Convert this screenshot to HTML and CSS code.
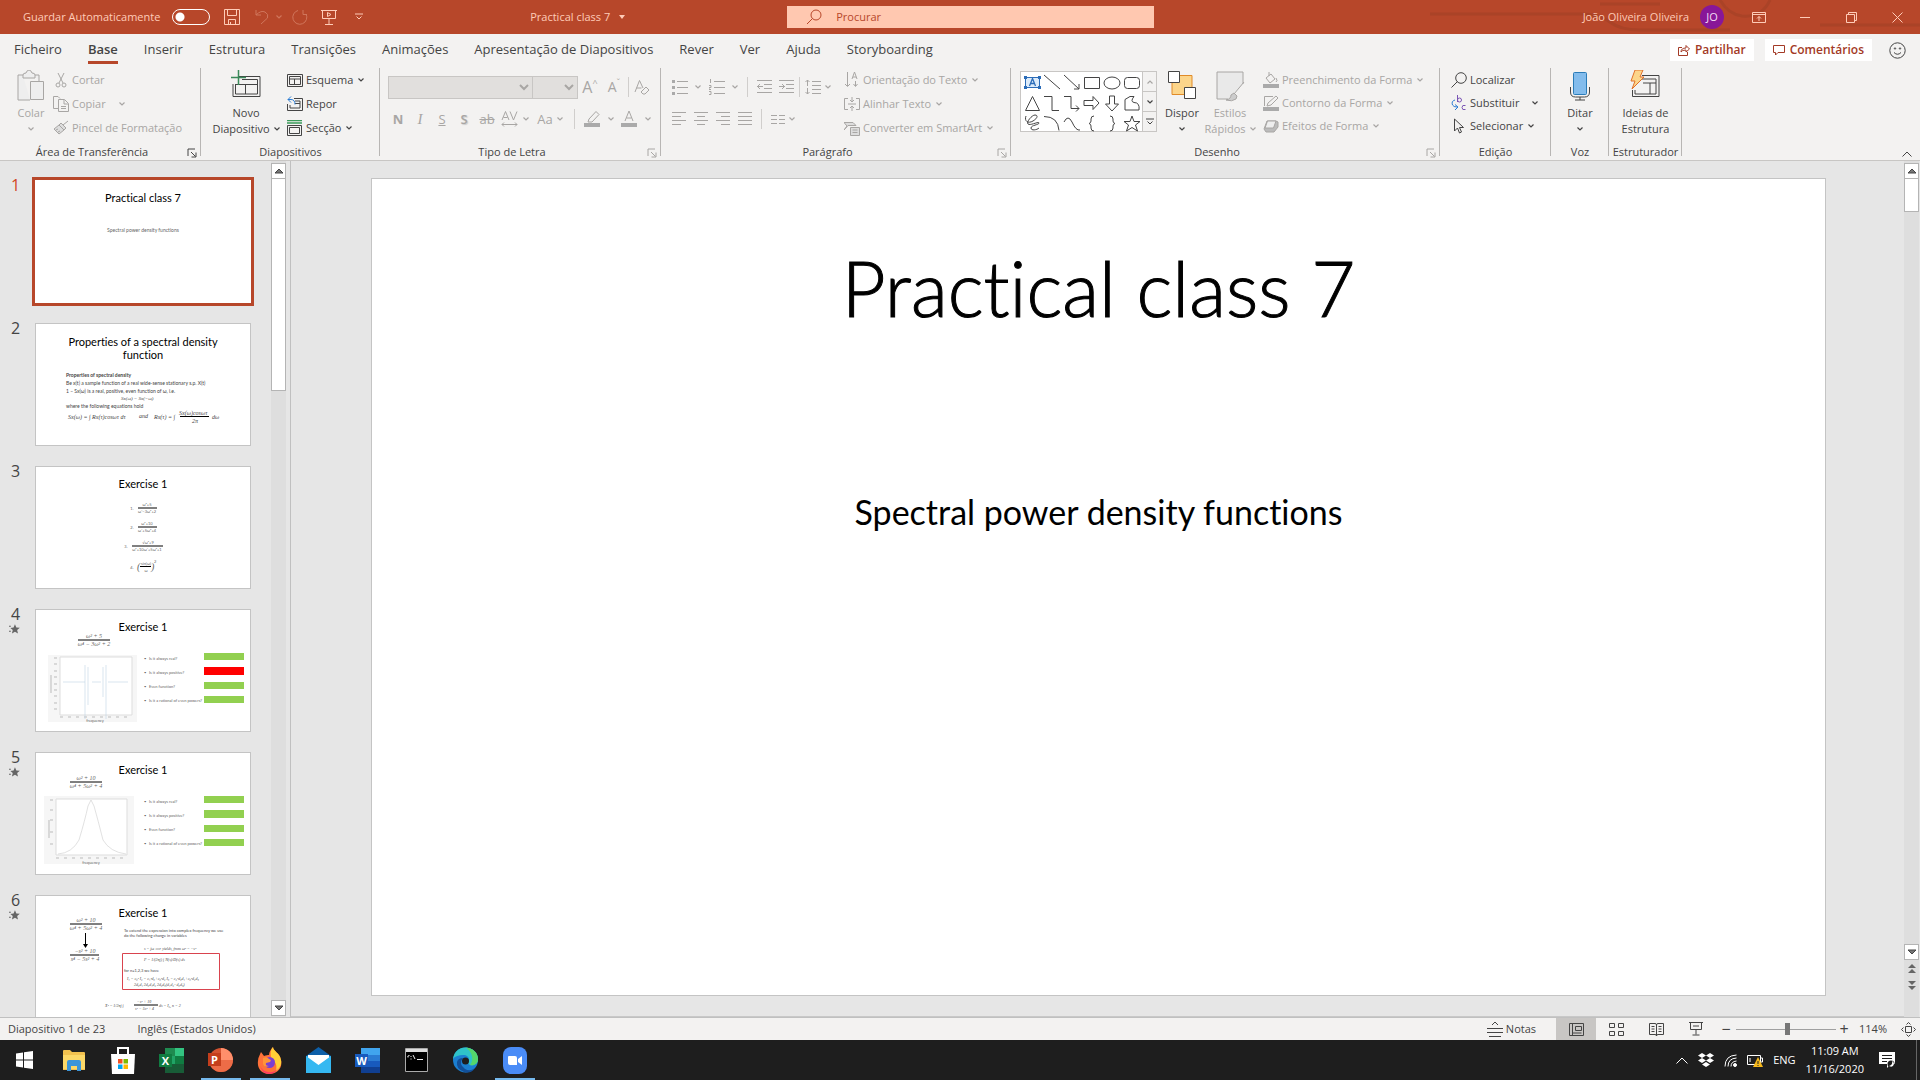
FILE: index.html
```
<!DOCTYPE html>
<html lang="pt">
<head>
<meta charset="utf-8">
<title>Practical class 7</title>
<link rel="stylesheet" href="styles.css">
</head>
<body>
<svg class="defs" aria-hidden="true">
  <symbol id="chev" viewBox="0 0 6 4"><path d="M.5 .5 3 3 5.500 .5" fill="none" stroke="currentColor" stroke-width="1.200"/></symbol>
  <symbol id="launch" viewBox="0 0 10 10"><path d="M1 8V1h7M4 4l4.500 4.500M9 4.500V9H4.500" fill="none" stroke="currentColor"/></symbol>
  <symbol id="up" viewBox="0 0 8 8"><path d="M0 6 4 2l4 4z" fill="#777"/></symbol>
  <symbol id="down" viewBox="0 0 8 8"><path d="M0 2l4 4 4-4z" fill="#777"/></symbol>
  <symbol id="star" viewBox="0 0 12 12"><path d="M6.500 .8 8 4.300l3.800.3-2.900 2.500.9 3.900-3.300-2.100L3.200 11l.9-3.900L1.500 4.800 5 4.300zM0 2.500h2v1H0zM0 8h2v1H0z" fill="#666"/></symbol>
</svg>

<header class="titlebar">
  <svg class="swirl" viewBox="0 0 500 34" fill="none" stroke="#8f3a22" stroke-width="3" aria-hidden="true"><path d="M10 14h150q20 0 30 8t30 8h90M300 0q8 14 22 16 20 2 28-16M400 25h100M180 4h60"/></svg>
  <div class="tb-left">
    <label class="autosave">Guardar Automaticamente <input type="checkbox" class="switch"></label>
    <button class="tb-btn save" aria-label="Guardar"><svg width="16" height="16" viewBox="0 0 16 16"><path d="M.5 .5h15v15h-15zM3.500 .5v6h9v-6M4.500 15.500v-5h7v5M6.500 13v2.500"/></svg></button>
    <button class="tb-btn undo" aria-label="Anular"><svg width="14" height="16" viewBox="0 0 14 16"><path d="M1 1v5h5M1 6q5-5 9-3t2.500 6L6 15"/></svg><svg class="chev"><use href="#chev"/></svg></button>
    <button class="tb-btn redo" aria-label="Refazer"><svg width="16" height="16" viewBox="0 0 16 16"><path d="M11 1v4.500h4M14 5A7 7 0 1 1 6 1.500"/></svg></button>
    <button class="tb-btn show" aria-label="Apresentar"><svg width="16" height="16" viewBox="0 0 16 16"><path d="M0 1.500h16M1.500 1.500v8h13v-8M8 10v5M4 15.500h8M6.500 3.500v4L10 5.500z"/></svg></button>
    <button class="tb-btn" aria-label="Personalizar"><svg width="8" height="8" viewBox="0 0 8 8"><path d="M0 1h8M1.500 3.500 4 6l2.500-2.500"/></svg></button>
    <button class="doc">Practical class 7 <svg width="6" height="4" viewBox="0 0 6 4"><path d="M0 0h6L3 4z" fill="currentColor" stroke="none"/></svg></button>
  </div>
  <label class="search"><svg width="16" height="16" viewBox="0 0 16 16"><circle cx="10" cy="6" r="5"/><path d="M6.500 9.500 1 15"/></svg><input type="search" placeholder="Procurar" aria-label="Procurar"></label>
  <div class="tb-right">
    <span>João Oliveira Oliveira</span><span class="avatar">JO</span>
    <button class="win" aria-label="Opções do friso"><svg width="14" height="11" viewBox="0 0 14 11"><path d="M.5 .5h13v10H.5zM.5 2.500h13M7 9V4.500M5 6.500l2-2 2 2"/></svg></button>
    <button class="win" aria-label="Minimizar"><svg width="10" height="10" viewBox="0 0 10 10"><path d="M0 5.500h10"/></svg></button>
    <button class="win" aria-label="Restaurar"><svg width="11" height="11" viewBox="0 0 11 11"><path d="M.5 2.500h8v8h-8zM2.500 2.500v-2h8v8h-2"/></svg></button>
    <button class="win" aria-label="Fechar"><svg width="11" height="11" viewBox="0 0 11 11"><path d="M.5 .5l10 10M10.500 .5l-10 10"/></svg></button>
  </div>
</header>

<nav class="tabs">
  <a href="#">Ficheiro</a><a href="#" class="on">Base</a><a href="#">Inserir</a><a href="#">Estrutura</a><a href="#">Transições</a><a href="#">Animações</a><a href="#">Apresentação de Diapositivos</a><a href="#">Rever</a><a href="#">Ver</a><a href="#">Ajuda</a><a href="#">Storyboarding</a>
  <div class="tab-actions">
    <button class="pill"><svg width="12" height="12" viewBox="0 0 12 12"><path d="M4 3.500H.5v8h9V8M3 8q0-4 5-4V1.500L11.500 5 8 8V6Q4 6 3 8z"/></svg>Partilhar</button>
    <button class="pill"><svg width="12" height="12" viewBox="0 0 12 12"><path d="M.5 1.500h11v7H5L2.500 11V8.500h-2z"/></svg>Comentários</button>
    <button class="smile" aria-label="Comentar"><svg width="17" height="17" viewBox="0 0 17 17"><circle cx="8.500" cy="8.500" r="7.700"/><path d="M5 10.500q3.500 3.500 7 0"/><circle cx="6" cy="6.500" r=".7"/><circle cx="11" cy="6.500" r=".7"/></svg></button>
  </div>
</nav>

<div class="ribbon">
  <section class="group clip">
    <div class="body">
      <button class="big off"><svg width="28" height="32" viewBox="0 0 28 32"><path d="M6 5H1v25h12M6 5q0-2 3-2 1-3 3-3t3 3q3 0 3 2v3H6zM18 5h4v6M13.500 11.500h13v18h-13z" fill="#eee"/></svg><span>Colar</span><svg class="chev"><use href="#chev"/></svg></button>
      <div class="stack">
        <button class="row off"><svg width="16" height="16" viewBox="0 0 16 16"><path d="M5 1l5 10M11 1 6 11"/><circle cx="5" cy="13" r="2"/><circle cx="11" cy="13" r="2"/></svg>Cortar</button>
        <button class="row off"><svg width="16" height="16" viewBox="0 0 16 16"><path d="M5 12.500H.5v-12H5L7 2.500M5.500 3.500h6l4 4v8h-10zM11 4v4h4M8 10.500h5M8 12.500h5"/></svg>Copiar <svg class="chev far"><use href="#chev"/></svg></button>
        <button class="row off"><svg width="16" height="16" viewBox="0 0 16 16"><path d="M15 1l-5 4M8 3l5 5-2 2-5-5zM6 5 1 9l5 5 5-4zM3 10l2-1M5 12l2-1" fill="#ddd"/></svg>Pincel de Formatação</button>
      </div>
    </div>
    <h2 class="has-launch">Área de Transferência<button class="launch" aria-label="Mais"><svg><use href="#launch"/></svg></button></h2>
  </section>

  <section class="group slides">
    <div class="body">
      <button class="big"><svg width="32" height="32" viewBox="0 0 32 32"><path d="M9 6.500h21v20H3V14M5.500 14v10h22V9.500H12M5.500 14.500H28M15.500 14.500V24" stroke="#444"/><path d="M8.500 0v15M1 7.500h15" stroke="#3a8a5a" stroke-width="1.500"/></svg><span>Novo</span><span>Diapositivo <svg class="chev"><use href="#chev"/></svg></span></button>
      <div class="stack">
        <button class="row"><svg width="16" height="16" viewBox="0 0 16 16"><path d="M.5 2.500h15v12H.5zM2.500 4.500h11v8h-11zM2.500 7h11M7.500 7v5.500"/></svg>Esquema <svg class="chev"><use href="#chev"/></svg></button>
        <button class="row"><svg width="16" height="16" viewBox="0 0 16 16"><path d="M7 2.500h8.500v12H.5V8M8 5h5v7H3V9M8 7.500h5"/><path d="M4 .5 1 3.500l3 3M1 3.500h3q4 0 4 5" stroke="#2b7cd3"/></svg>Repor</button>
        <button class="row"><svg width="16" height="16" viewBox="0 0 16 16"><path d="M.5 5.500h14v10H.5zM2.500 7.500h10v6h-10z"/><path d="M0 .5h15M0 3h15" stroke="#3a9a5a" stroke-width="1.500"/></svg>Secção <svg class="chev"><use href="#chev"/></svg></button>
      </div>
    </div>
    <h2>Diapositivos</h2>
  </section>

  <section class="group font">
    <div class="body lines off">
      <div class="line">
        <select class="combo face" aria-label="Tipo de letra" disabled></select><select class="combo size" aria-label="Tamanho" disabled></select>
        <button class="t w24 a-big">A<sup>^</sup></button><button class="t w24 a-mid">A<sup>ˇ</sup></button><i class="sep slim"></i>
        <button class="t w22" aria-label="Limpar"><svg width="16" height="16" viewBox="0 0 16 16"><path d="M1 13 5.500 1.500 9 9M2.500 9h5M9 15l-2-2 5-5 3 3-4 4z"/></svg></button>
      </div>
      <div class="line">
        <button class="t w22"><b>N</b></button><button class="t w22"><em>I</em></button><button class="t w22"><u>S</u></button><button class="t w22 shade">S</button><button class="t w24"><s>ab</s></button>
        <button class="t w32" aria-label="Espaçamento"><svg width="18" height="18" viewBox="0 0 18 18"><path d="M1 10 4.500 1.500 8 10M2.500 7.500h4M9 1.500l3.500 8.500L16 1.500M1 14.500h15M3 12.500l-2 2 2 2M14 12.500l2 2-2 2"/></svg><svg class="chev"><use href="#chev"/></svg></button>
        <button class="t w38">Aa <svg class="chev"><use href="#chev"/></svg></button><i class="sep"></i>
        <button class="t w37" aria-label="Realce"><svg width="17" height="18" viewBox="0 0 17 18"><path d="M5 9 12 1.500 15 4.500 8 12H4z"/><path d="M0 13h16v4H0z" fill="#aaa" stroke="none"/></svg><svg class="chev wide"><use href="#chev"/></svg></button>
        <button class="t w37" aria-label="Cor"><svg width="17" height="18" viewBox="0 0 17 18"><path d="M4 11 8 1l4 10M5.500 8h5"/><path d="M0 13h16v4H0z" fill="#aaa" stroke="none"/></svg><svg class="chev wide"><use href="#chev"/></svg></button>
      </div>
    </div>
    <h2 class="has-launch">Tipo de Letra<button class="launch off" aria-label="Mais"><svg><use href="#launch"/></svg></button></h2>
  </section>

  <section class="group para">
    <div class="body off">
      <div class="lines">
        <div class="line">
          <button class="t w37" aria-label="Marcas"><svg width="16" height="16" viewBox="0 0 16 16"><path d="M5 2.500h11M5 8.500h11M5 14.500h11"/><path d="M0 1h3v3H0zM0 7h3v3H0zM0 13h3v3H0z" fill="#aaa" stroke="none"/></svg><svg class="chev wide"><use href="#chev"/></svg></button>
          <button class="t w37" aria-label="Numeração"><svg width="16" height="16" viewBox="0 0 16 16"><path d="M5 2.500h11M5 8.500h11M5 14.500h11M1.500 0v4M0 6.500h2v2H0v2h2M0 12.500h2v3H0"/></svg><svg class="chev wide"><use href="#chev"/></svg></button><i class="sep"></i>
          <button class="t w22" aria-label="Diminuir avanço"><svg width="15" height="14" viewBox="0 0 15 14"><path d="M0 .5h15M7 4.500h8M7 8.500h8M0 12.500h15M6 6.500H0M3 4 .5 6.500 3 9"/></svg></button><button class="t w22" aria-label="Aumentar avanço"><svg width="15" height="14" viewBox="0 0 15 14"><path d="M0 .5h15M7 4.500h8M7 8.500h8M0 12.500h15M0 6.500h6M3 4l2.500 2.500L3 9"/></svg></button><i class="sep slim"></i>
          <button class="t w32" aria-label="Espaçamento entre linhas"><svg width="16" height="16" viewBox="0 0 16 16"><path d="M7 2.500h9M7 6.500h9M7 10.500h9M7 14.500h9M2.500 1v6M.5 3l2-2 2 2M2.500 9v6M.5 13l2 2 2-2"/></svg><svg class="chev"><use href="#chev"/></svg></button>
        </div>
        <div class="line">
          <button class="t w22" aria-label="Esquerda"><svg width="14" height="14" viewBox="0 0 14 14"><path d="M0 .5h14M0 4.500h9M0 8.500h14M0 12.500h9"/></svg></button><button class="t w22" aria-label="Centro"><svg width="14" height="14" viewBox="0 0 14 14"><path d="M0 .5h14M3 4.500h8M0 8.500h14M3 12.500h8"/></svg></button><button class="t w22" aria-label="Direita"><svg width="14" height="14" viewBox="0 0 14 14"><path d="M0 .5h14M5 4.500h9M0 8.500h14M5 12.500h9"/></svg></button><button class="t w22" aria-label="Justificar"><svg width="14" height="14" viewBox="0 0 14 14"><path d="M0 .5h14M0 4.500h14M0 8.500h14M0 12.500h14"/></svg></button><i class="sep"></i>
          <button class="t w32" aria-label="Colunas"><svg width="14" height="10" viewBox="0 0 14 10"><path d="M0 1.500h6M0 5.500h6M0 9.500h6M8 1.500h6M8 5.500h6M8 9.500h6"/></svg><svg class="chev"><use href="#chev"/></svg></button>
        </div>
      </div>
      <div class="stack">
        <button class="row"><svg width="16" height="16" viewBox="0 0 16 16"><path d="M3.500 0v14M1 12l2.500 2.500L6 12M8 7l2.500-7L13 7M9 5h3M11.500 9v5M9.500 12l2 2.500 2-2.500"/></svg>Orientação do Texto <svg class="chev"><use href="#chev"/></svg></button>
        <button class="row"><svg width="16" height="16" viewBox="0 0 16 16"><path d="M4 2.500H.5v11H4M12 2.500h3.500v11H12M4 8h8M8 1v5M6 4l2 2 2-2M8 15v-5M6 12l2-2 2 2"/></svg>Alinhar Texto <svg class="chev"><use href="#chev"/></svg></button>
        <button class="row"><svg width="16" height="16" viewBox="0 0 16 16"><path d="M0 2.500h9l3 3H4L0 10l3-4zM6.500 7.500h9v8h-9zM8.500 10h5M8.500 12.500h5" fill="#ddd"/></svg>Converter em SmartArt <svg class="chev"><use href="#chev"/></svg></button>
      </div>
    </div>
    <h2 class="has-launch">Parágrafo<button class="launch off" aria-label="Mais"><svg><use href="#launch"/></svg></button></h2>
  </section>

  <section class="group draw">
    <div class="body">
      <div class="gallery">
        <svg width="121" height="60" viewBox="0 0 121 60"><g stroke="#2b6cb8"><path d="M4.500 5.500h14v10h-14z" fill="#dcebfa"/><path d="M8.500 14l3-7.500 3 7.500M9.500 11.500h4" stroke-width="1.300"/><path d="M3 4h3v3H3zM17 4h3v3h-3zM3 14h3v3H3zM17 14h3v3h-3z" fill="#2b6cb8" stroke="none"/></g><path d="M23 3l16 14M43 3l15 14M58 12v5h-5M63.500 5.500h15v11h-15zM11.500 24.500l7 14h-14zM23 24.500h8v14h7M43 24.500h7v12h8M55 33.500l3 3-3 3M63 28.500h9v-4l6 6.500-6 6.500v-4h-9zM88.500 24v8h-4l6.500 7 6.500-7h-4v-8zM104 27.500l5-3h4q-4 5 0 6 6 0 5 7.500h-14zM23 44.500q14 0 15 14M43 50q4-8 8 0 4 9 8 8M73 44q-3 0-3 3v2q0 2-2 2.500 2 .5 2 2.500v2q0 3 3 3M89 44q3 0 3 3v2q0 2 2 2.500-2 .5-2 2.500v2q0 3-3 3M111 44l2 5.500h6l-4.500 3.500 2 6-5.500-3.500-5.500 3.500 2-6L103 49.500h6zM5 44c-2 5 2 8 7 5s5-6 2-6-9 7-7 9 11-3 11-1-8 2-8 5 6 2 8 0"/><ellipse cx="91" cy="11" rx="8" ry="6"/><rect x="103.500" y="5.500" width="15" height="11" rx="3"/></svg>
        <div class="gal-scroll"><button aria-label="Acima" class="off"><svg class="chev flip"><use href="#chev"/></svg></button><button aria-label="Abaixo"><svg class="chev"><use href="#chev"/></svg></button><button aria-label="Mais formas"><svg width="8" height="8" viewBox="0 0 8 8"><path d="M0 1h8M1.500 3.500 4 6l2.500-2.500"/></svg></button></div>
      </div>
      <button class="big"><svg width="30" height="32" viewBox="0 0 30 32"><path d="M5 5.500h20v19H5z" fill="#fcd58a" stroke="#e08a28"/><path d="M1.500 1.500h11v11h-11zM17.500 17.500h11v11h-11z" fill="#fff"/></svg><span>Dispor</span><svg class="chev"><use href="#chev"/></svg></button>
      <button class="big off styles"><svg width="32" height="32" viewBox="0 0 32 32"><path d="M14 29H3V2h26v12" fill="#e9e9e9"/><path d="M30 12 20 24M12 30q5-1 5-5l3-2 3 3-1 3q-4 3-10 1z" fill="#ccc"/></svg><span>Estilos</span><span>Rápidos <svg class="chev"><use href="#chev"/></svg></span></button>
      <div class="stack tight off">
        <button class="row"><svg width="16" height="16" viewBox="0 0 16 16"><path d="M3 6l5-4 4 5-5 4zM6 4V0M13 6q2 3 0 4"/><path d="M0 12h16v4H0z" fill="#aaa" stroke="none"/></svg>Preenchimento da Forma <svg class="chev"><use href="#chev"/></svg></button>
        <button class="row"><svg width="16" height="16" viewBox="0 0 16 16"><path d="M10 1.500H1.500V11M4 11l1-3 8-7 2 2-7 7z"/><path d="M0 12h16v4H0z" fill="#aaa" stroke="none"/></svg>Contorno da Forma <svg class="chev"><use href="#chev"/></svg></button>
        <button class="row"><svg width="16" height="16" viewBox="0 0 16 16"><path d="M1 11l3-8h9l2 1v5l-4 5H3z" fill="#bbb"/><path d="M4.500 3h8.500l-2.500 7H2z" fill="#eee"/></svg>Efeitos de Forma <svg class="chev"><use href="#chev"/></svg></button>
      </div>
    </div>
    <h2 class="has-launch">Desenho<button class="launch off" aria-label="Mais"><svg><use href="#launch"/></svg></button></h2>
  </section>

  <section class="group edit">
    <div class="body">
      <div class="stack tight">
        <button class="row"><svg width="16" height="16" viewBox="0 0 16 16"><circle cx="10" cy="6" r="5.300"/><path d="M6.500 9.500.5 15.500"/></svg>Localizar</button>
        <button class="row"><svg width="16" height="16" viewBox="0 0 16 16"><path d="M6.500 0v7M6.500 5q0-2 2-2t2 2-2 2-2-2M14.500 10.500q-3.500-1-3.500 2t3.500 2" stroke="#7a55b5"/><path d="M4 5Q0 6 1.500 10q1 2 4.500 2M4 9.500 7 12l-3 3" stroke="#2b7cd3"/></svg>Substituir <svg class="chev far"><use href="#chev"/></svg></button>
        <button class="row"><svg width="16" height="16" viewBox="0 0 16 16"><path d="M3.500 1v12l3-3 2 5 2-1-2-4.500h4z"/></svg>Selecionar <svg class="chev"><use href="#chev"/></svg></button>
      </div>
    </div>
    <h2>Edição</h2>
  </section>

  <section class="group voice">
    <div class="body"><button class="big"><svg width="20" height="32" viewBox="0 0 20 32"><rect x="3.500" y="2.500" width="13" height="22" rx="1" fill="#83bcec" stroke="#2b7cb8"/><path d="M.5 17v5q0 5 5 5h9q5 0 5-5v-5M10 27v3M5 30h10"/></svg><span>Ditar</span><svg class="chev"><use href="#chev"/></svg></button></div>
    <h2>Voz</h2>
  </section>

  <section class="group ideas">
    <div class="body"><button class="big"><svg width="32" height="32" viewBox="0 0 32 32"><path d="M13 5.500h17v21H3.500V20M13 9h14v15H6v-4M14 13h13M21 13v11"/><path d="M6 0h8l-3 7h4L3 19l3-8H2z" fill="#fcd58a" stroke="#e0702a"/></svg><span>Ideias de</span><span>Estrutura</span></button></div>
    <h2>Estruturador</h2>
  </section>
  <button class="collapse" aria-label="Fechar o friso"><svg width="10" height="6" viewBox="0 0 10 6"><path d="M.5 5.500 5 1l4.500 4.500"/></svg></button>
</div>

<div class="work">
  <aside class="pane">
    <ol class="thumbs">
      <li class="sel"><span class="num">1</span><svg class="thumb" viewBox="0 0 216 123"><text class="tt" x="108" y="22">Practical class 7</text><text class="s5 mid" x="108" y="52">Spectral power density functions</text></svg></li>
      <li><span class="num">2</span><svg class="thumb" viewBox="0 0 216 123"><text class="tt" x="108" y="23">Properties of a spectral density</text><text class="tt" x="108" y="36">function</text>
        <g class="s5 dark"><text x="31" y="54" font-weight="bold">Properties of spectral density</text><text x="31" y="62">Be x(t) a sample function of a real wide-sense stationary s.p. X(t)</text><text x="31" y="70">1 – Sx(ω) is a real, positive, even function of ω, i.e.</text><text class="m" x="86" y="77">Sx(ω) = Sx(−ω)</text><text x="31" y="85">where the following equations hold</text><g class="s6"><text class="m" x="33" y="96">Sx(ω) = ∫ Rx(τ)cosωτ dτ</text><text x="104" y="95">and</text><text class="m" x="119" y="96">Rx(τ) = ∫</text><text class="m" x="144" y="92">Sx(ω)cosωτ</text><text class="m" x="157" y="100">2π</text><text class="m" x="177" y="96">dω</text></g></g><path d="M145 93.500h29" class="ln"/></svg></li>
      <li><span class="num">3</span><svg class="thumb" viewBox="0 0 216 123"><text class="tt" x="108" y="22">Exercise 1</text>
        <g class="s4 mid"><text x="97" y="44">1.</text><text x="112" y="40">ω²+5</text><text x="112" y="47">ω⁴−3ω²+2</text><text x="97" y="63">2.</text><text x="112" y="59">ω²+10</text><text x="112" y="66">ω⁴+5ω²+4</text><text x="91" y="82">3.</text><text x="113" y="78">√ω²+9</text><text x="112" y="85">ω⁶+10ω⁴+5ω²+1</text><text x="97" y="103">4.</text><text x="111" y="99">sin(ω)</text><text x="111" y="106">ω</text></g><text class="m paren" x="102" y="104">(</text><text class="m paren" x="116" y="104">)</text><text class="s4" x="119" y="97">2</text><path class="ln" d="M103 42h19M103 61h19M97 80h31M105 100.500h11"/></svg></li>
      <li><span class="num">4</span><svg class="star"><use href="#star"/></svg><svg class="thumb" viewBox="0 0 216 123"><text class="tt" x="108" y="22">Exercise 1</text><g class="s6 mid"><text x="59" y="29">ω² + 5</text><text x="59" y="37">ω⁴ − 3ω² + 2</text></g><path class="ln" d="M43 31h32"/><path d="M13 46h89v67H13z" fill="#f6f6f6"/><path d="M25 48h72v58H25z" fill="#fff" stroke="#ddd"/><path d="M19 49h3M19 55h3M19 62h3M19 68h3M19 75h3M19 81h3M19 87h3M19 94h3M19 100h3M25 108h72" stroke="#bbb" stroke-dasharray="3 5"/><text class="s4 mid" x="60" y="113">frequency</text><path d="M16 66v18" stroke="#bbb"/><path d="M28 73h22M57 73h9M73 73h20M50 56v54M53 58v38M68 58v30M71 56v54" stroke="#bfd4e4" stroke-width=".6" fill="none"/>
        <g class="s4"><text x="109" y="51">•</text><text x="114" y="51">Is it always real?</text><text x="109" y="65">•</text><text x="114" y="65">Is it always positive?</text><text x="109" y="79">•</text><text x="114" y="79">Even function?</text><text x="109" y="93">•</text><text x="114" y="93">Is it a rational of even powers?</text></g><path d="M169 44h40v7h-40zM169 73h40v7h-40zM169 87h40v7h-40z" fill="#92d050"/><path d="M169 58h40v8h-40z" fill="red"/></svg></li>
      <li><span class="num">5</span><svg class="star"><use href="#star"/></svg><svg class="thumb" viewBox="0 0 216 123"><text class="tt" x="108" y="22">Exercise 1</text><g class="s6 mid"><text x="51" y="28">ω² + 10</text><text x="51" y="36">ω⁴ + 5ω² + 4</text></g><path class="ln" d="M35 30h32"/><path d="M9 44h90v68H9z" fill="#f6f6f6"/><path d="M21 47h71v56H21z" fill="#fff" stroke="#ddd"/><path d="M15 48h4M15 58h4M15 68h4M15 80h4M15 92h4M21 106h71" stroke="#bbb" stroke-dasharray="3 5"/><text class="s4 mid" x="56" y="112">frequency</text><path d="M14 68v18" stroke="#bbb"/><path d="M23 102q14-1 21-14 6-20 9-34l3-6 3 6q4 14 9 34 7 12 23 14" stroke="#ccc" stroke-width=".6" fill="none"/>
        <g class="s4"><text x="109" y="51">•</text><text x="114" y="51">Is it always real?</text><text x="109" y="65">•</text><text x="114" y="65">Is it always positive?</text><text x="109" y="79">•</text><text x="114" y="79">Even function?</text><text x="109" y="93">•</text><text x="114" y="93">Is it a rational of even powers?</text></g><path d="M169 44h40v7h-40zM169 58h40v8h-40zM169 73h40v7h-40zM169 87h40v7h-40z" fill="#92d050"/></svg></li>
      <li><span class="num">6</span><svg class="star"><use href="#star"/></svg><svg class="thumb" viewBox="0 0 216 123"><text class="tt" x="108" y="22">Exercise 1</text><g class="s6 mid"><text x="51" y="27">ω² + 10</text><text x="51" y="35">ω⁴ + 5ω² + 4</text><text x="50" y="58">−s² + 10</text><text x="50" y="66">s⁴ − 5s² + 4</text></g><path class="ln" d="M35 29h32M35 60h29M50.500 38v12"/><path d="M48 49h5l-2.500 4z"/>
        <g class="s4 dark"><text x="89" y="37">To extend the expression into complex frequency we use</text><text x="89" y="42">do the following change in variables</text><text class="m" x="109" y="55">s = jω  ⟹  yields, from ω² = −s²</text><text class="m" x="109" y="66">F = 1/(2πj) ∫ N(s)/D(s) ds</text><text x="89" y="77">for n=1,2,3 we have</text><text class="m" x="92" y="85">I₁ = c₀²   I₂ = c₁²d₀+c₀²d₂   I₃ = c₂²d₀d₁+c₀²d₂d₃</text><text class="m" x="99" y="91">2d₀d₁      2d₀d₁d₂      2d₀d₃(d₁d₂−d₀d₃)</text><text class="m" x="70" y="112">X² = 1/2πj ∫</text><text class="m" x="102" y="108">−s² + 10</text><text class="m" x="100" y="115">s⁴ − 5s² + 4</text><text class="m" x="124" y="112">ds = I₂, n = 2</text></g><path class="ln" d="M99 110h24"/><path d="M87.500 58.500h97v36h-97z" fill="none" stroke="#d9434e"/></svg></li>
    </ol>
    <div class="scroll"><button class="sb" aria-label="Acima"><svg><use href="#up"/></svg></button><div class="grip long"></div><div class="track"></div><button class="sb" aria-label="Abaixo"><svg><use href="#down"/></svg></button></div>
  </aside>
  <main class="stage">
    <article class="slide"><h1>Practical class 7</h1><p>Spectral power density functions</p></article>
  </main>
  <div class="scroll right"><button class="sb" aria-label="Acima"><svg><use href="#up"/></svg></button><div class="grip"></div><div class="track"></div><button class="sb" aria-label="Abaixo"><svg><use href="#down"/></svg></button>
    <button class="jump" aria-label="Diapositivo anterior"><svg width="8" height="9" viewBox="0 0 8 9"><path d="M0 4l4-4 4 4zM0 9l4-4 4 4z"/></svg></button><button class="jump" aria-label="Diapositivo seguinte"><svg width="8" height="9" viewBox="0 0 8 9"><path d="M0 0l4 4 4-4zM0 5l4 4 4-4z"/></svg></button></div>
</div>

<div class="status">
  <span>Diapositivo 1 de 23</span><span class="lang">Inglês (Estados Unidos)</span>
  <button class="notes"><svg width="16" height="16" viewBox="0 0 16 16"><path d="M5 4l3-3 3 3M0 7.500h16M0 11.500h16M2 15.500h12"/></svg>Notas</button>
  <button class="view on" aria-label="Normal"><svg width="15" height="13" viewBox="0 0 15 13"><path d="M.5 .5h14v12H.5zM3.500 .5v12M6.500 3.500h6v4h-6zM3.500 10h9"/></svg></button>
  <button class="view" aria-label="Organizador"><svg width="15" height="13" viewBox="0 0 15 13"><path d="M.5 .5h5v4h-5zM9.500 .5h5v4h-5zM.5 8.500h5v4h-5zM9.500 8.500h5v4h-5z"/></svg></button>
  <button class="view" aria-label="Leitura"><svg width="15" height="13" viewBox="0 0 15 13"><path d="M.5 .5H6q1.500 0 1.500 1.500Q7.500 .5 9 .5h5.500v11H9q-1.500 0-1.500 1.500Q7.500 11.500 6 11.500H.5zM7.500 2v11M2.500 3.500h3M2.500 6h3M2.500 8.500h3M9.500 3.500h3M9.500 6h3M9.500 8.500h3"/></svg></button>
  <button class="view" aria-label="Apresentação"><svg width="14" height="14" viewBox="0 0 14 14"><path d="M0 .5h14M1.500 .5v7h11v-7M7 7.500v5M3.500 13h7M4 4h6"/></svg></button>
  <button class="zoom" aria-label="Reduzir">−</button><input type="range" min="0" max="100" value="52" aria-label="Zoom"><button class="zoom plus" aria-label="Ampliar">+</button>
  <button class="pct">114%</button>
  <button class="fit" aria-label="Ajustar"><svg width="15" height="15" viewBox="0 0 15 15"><path d="M4.500 4.500h6v6h-6zM5.500 2.500l2-2 2 2M5.500 12.500l2 2 2-2M2.500 5.500l-2 2 2 2M12.500 5.500l2 2-2 2"/></svg></button>
</div>

<footer class="taskbar">
  <button class="app" aria-label="Iniciar"><svg width="17" height="18" viewBox="0 0 17 18" fill="#fff"><path d="M0 2.500 7 1.500v7H0zM8 1.300 17 0v8.500H8zM0 9.500h7v7l-7-1zM8 9.500h9V18l-9-1.300z"/></svg></button>
  <button class="app" aria-label="Explorador"><svg width="22" height="22" viewBox="0 0 22 22"><path d="M0 2q0-1 1-1h6l2 2h12q1 0 1 1v17H0z" fill="#f2c14e"/><path d="M0 6h22v14H0z" fill="#fcd867"/><path d="M4 22v-9q0-2 2-2h10q2 0 2 2v9h-4v-5H8v5z" fill="#3b95d9"/></svg></button>
  <button class="app" aria-label="Loja"><svg width="24" height="28" viewBox="0 0 24 28"><path d="M7 8V2h10v6" fill="none" stroke="#fff" stroke-width="2"/><path d="M0 8h24l-1 20H1z" fill="#fff"/><path d="M7 13h4.500v4.500H7z" fill="#f25022"/><path d="M12.500 13H17v4.500h-4.500z" fill="#7fba00"/><path d="M7 18.500h4.500V23H7z" fill="#00a4ef"/><path d="M12.500 18.500H17V23h-4.500z" fill="#ffb900"/></svg></button>
  <button class="app" aria-label="Excel"><svg width="25" height="25" viewBox="0 0 25 25"><path d="M6 0h19v25H6z" fill="#21a366"/><path d="M6 0h10v8H6z" fill="#1f8a50"/><path d="M16 0h9v8h-9z" fill="#33c481"/><path d="M6 16h19v9H6z" fill="#185c37"/><path d="M16 8h9v8h-9z" fill="#107c41"/><path d="M0 6h13v13H0z" fill="#107c41"/><text class="logo" x="6.500" y="17">X</text></svg></button>
  <button class="app run" aria-label="PowerPoint"><svg width="25" height="26" viewBox="0 0 25 26"><circle cx="13" cy="13" r="12" fill="#d35230"/><path d="M13 1a12 12 0 0 1 12 12H13z" fill="#ff8f6b"/><path d="M25 13a12 12 0 0 1-24 0z" fill="#ed6c47"/><path d="M0 6h13v13H0z" fill="#c43e1c"/><text class="logo" x="6.500" y="17">P</text></svg></button>
  <button class="app run" aria-label="Firefox"><svg width="25" height="27" viewBox="0 0 25 27"><path d="M12 27C4 27 0 21 1 14c0-4 2-6 3-9l3 4c2-1 4-1 5-1 0-3 2-6 4-8 0 4 7 6 8 13 2 8-4 14-12 14z" fill="#ff7139"/><path d="M16 0c0 4 7 6 8 13 1 5-2 9-5 11 2-8-3-11-5-14-1-4 0-8 2-10z" fill="#ffcf36"/><path d="M3 18c2 8 14 10 18 3-2 5-7 6-9 6-5 0-8-4-9-9z" fill="#ff3b62"/><circle cx="12.500" cy="15.500" r="5.500" fill="#7b3fd1"/><path d="M6 11q4-2 6 1 3 1 1 3l-4 1q-1 3 3 3-5 2-6-2z" fill="#ff9538"/></svg></button>
  <button class="app" aria-label="Correio"><svg width="25" height="26" viewBox="0 0 25 26"><path d="M0 9 12.500 0 25 9v5H0z" fill="#0d5fa8"/><path d="M0 9h25v17H0z" fill="#1b9de2"/><path d="M2 8h21v3l-10.500 8L2 11z" fill="#fff"/><path d="M0 9l12.500 9L25 9v17H0z" fill="#35b8f1"/></svg></button>
  <button class="app" aria-label="Word"><svg width="25" height="25" viewBox="0 0 25 25"><path d="M6 0h19v7H6z" fill="#41a5ee"/><path d="M6 7h19v6H6z" fill="#2b7cd3"/><path d="M6 13h19v6H6z" fill="#185abd"/><path d="M6 19h19v6H6z" fill="#103f91"/><path d="M0 6h13v13H0z" fill="#185abd"/><text class="logo" x="6.500" y="17">W</text></svg></button>
  <button class="app" aria-label="Linha de comandos"><svg width="23" height="24" viewBox="0 0 23 24"><path d="M.5 .5h22v23H.5z" fill="#000" stroke="#aaa"/><path d="M1 1h21v3H1z" fill="#ddd"/><path d="M3 9.500q-1-2 1.500-2M6 8v1M6 10.500v1M8 7l2 4M12 11.500h6" fill="none" stroke="#eee"/></svg></button>
  <button class="app" aria-label="Edge"><svg width="25" height="28" viewBox="0 0 25 28"><circle cx="12.500" cy="14" r="12.500" fill="#1b7fd1"/><path d="M0 13C1 5 7 1 13 1.500 20 2 25 7 25 13c0 5-4 7-8 6-3-1-1-3-1-5 0-3-2-5-6-5S2 10 0 13z" fill="#2fc3c9"/><path d="M13 1.500C20 2 25 7 25 13c0 5-4 7-8 6 4-5 3-12-4-17.500z" fill="#55d66b"/><path d="M10 12q-5 6 2 11 5 3 10-1-4 6-11 4-8-3-7-10 1-4 6-4z" fill="#124f98"/><circle cx="12.500" cy="15" r="3.500" fill="#1e1e1e"/></svg></button>
  <button class="app run" aria-label="Zoom"><svg width="24" height="27" viewBox="0 0 24 27"><rect x="0" y="0" width="24" height="27" rx="8" fill="#4a8cf7"/><path d="M5 10q0-1 1-1h6q2 0 2 2v7H7q-2 0-2-2zM15 12l4-3v9l-4-3z" fill="#fff"/></svg></button>
  <div class="tray">
    <svg class="st" width="12" height="7" viewBox="0 0 12 7"><path d="M.5 6.500 6 1l5.500 5.500"/></svg>
    <svg width="16" height="14" viewBox="0 0 16 14" fill="#fff"><path d="M4 0l4 2.500L4 5 0 2.500zM12 0l4 2.500L12 5 8 2.500zM4 5l4 2.500L4 10 0 7.500zM12 5l4 2.500-4 2.500-4-2.500zM8 9l4 2.500L8 14l-4-2.500z"/></svg>
    <svg class="st" width="13" height="13" viewBox="0 0 13 13"><path d="M1 12.500Q1 1.500 12.500 1M4 12.500Q4 4.500 12.500 4M7 12.500Q7 7.500 12.500 7"/><circle cx="11" cy="11" r="1.500" fill="#fff"/></svg>
    <svg width="16" height="14" viewBox="0 0 16 14"><path d="M.5 2.500h13v9H.5zM14 5h1.500v4H14M3 5v4" fill="none" stroke="#fff"/><path d="M11 4l5 10H6z" fill="#f5b81c"/><path d="M11 8v3M11 12v1" stroke="#222"/></svg>
    <span class="eng">ENG</span>
    <time class="clock"><span>11:09 AM</span><span>11/16/2020</span></time>
    <svg width="16" height="16" viewBox="0 0 16 16"><path d="M0 0h16v12h-4l-4 4v-4H0z" fill="#fff"/><path d="M3 3.500h10M3 6.500h10M3 9.500h5" stroke="#1e1e1e"/><circle cx="12" cy="12" r="3.500" fill="#1e1e1e"/><path d="M13 9q1 4-3 5 4 2 5-2 0-2-2-3z" fill="#fff"/></svg>
    <i class="peek"></i>
  </div>
</footer>
</body>
</html>
```
FILE: styles.css
```
* { box-sizing: border-box; }

body {
  margin: 0;
  height: 100vh;
  display: flex;
  flex-direction: column;
  overflow: hidden;
  font: 11px/16px "Open Sans", "Noto Sans", sans-serif;
  color: #444;
  background: #e6e6e6;
}

button {
  display: flex;
  align-items: center;
  flex: none;
  margin: 0;
  padding: 0;
  border: 0;
  background: none;
  color: inherit;
  font: inherit;
  white-space: nowrap;
}

svg { flex: none; display: block; }
button svg, .search svg, .st { fill: none; stroke: currentColor; }
.defs { position: absolute; width: 0; height: 0; }
.chev { width: 6px; height: 4px; stroke: none; }
.flip { transform: scaleY(-1); }

/* Title bar */
.titlebar {
  position: relative;
  flex: none;
  display: grid;
  grid-template-columns: 41% 367px 1fr;
  align-items: center;
  height: 34px;
  background: #b7472a;
  color: #ffccb8;
}
.swirl { position: absolute; right: 0; top: 0; width: 500px; height: 34px; opacity: 0.3; }
.tb-left { display: flex; align-items: center; padding-left: 23px; }
.autosave { display: flex; align-items: center; justify-content: space-between; width: 187px; margin-right: 14px; white-space: nowrap; }
.switch {
  appearance: none;
  flex: none;
  width: 38px;
  height: 16px;
  margin: 0;
  border: 1px solid #fff;
  border-radius: 8px;
  background: radial-gradient(circle at 7px 7px, #fff 4px, transparent 5px);
}
.tb-btn { gap: 7px; }
.save { width: 31px; }
.undo, .redo { opacity: 0.35; }
.undo { width: 37px; }
.redo { width: 29px; }
.show { width: 34px; }
.doc { gap: 9px; margin-left: auto; margin-right: 162px; }
.search {
  display: flex;
  align-items: center;
  gap: 14px;
  height: 22px;
  padding-left: 19px;
  background: #ffc8b0;
  color: #b7472a;
}
.search input { flex: 1; border: 0; padding: 0; background: none; font: inherit; outline: 0; }
.search input::placeholder { color: #b7472a; opacity: 1; }
.tb-right { display: flex; align-items: center; justify-content: flex-end; position: relative; }
.avatar {
  width: 24px;
  margin: 0 12px 0 11px;
  border-radius: 12px;
  background: #881798;
  color: #f3dcf5;
  line-height: 24px;
  text-align: center;
}
.win { width: 46px; height: 34px; justify-content: center; }

/* Tabs */
.tabs {
  flex: none;
  display: flex;
  align-items: center;
  gap: 26px;
  height: 32px;
  padding-left: 14px;
  background: #f3f2f1;
  font-size: 13px;
}
.tabs a { color: #444; text-decoration: none; line-height: 24px; border-bottom: 3px solid transparent; white-space: nowrap; }
.tabs a.on { border-color: #b7472a; font-weight: 600; }
.tab-actions { display: flex; align-items: center; margin-left: auto; padding-right: 14px; }
.pill {
  gap: 5px;
  height: 22px;
  margin-right: 11px;
  padding: 0 8px;
  background: #fff;
  color: #a33a26;
  font-size: 12px;
  font-weight: 600;
}
.smile { margin-left: 6px; }

/* Ribbon */
.ribbon {
  flex: none;
  display: flex;
  height: 95px;
  padding-top: 2px;
  background: #f3f2f1;
  border-bottom: 1px solid #c8c6c4;
}
.group {
  flex: none;
  display: flex;
  flex-direction: column;
  background: linear-gradient(#b8b6b4, #b8b6b4) right top / 1px 88px no-repeat;
}
.group h2 {
  position: relative;
  margin: 0;
  font-size: 11px;
  font-weight: 400;
  line-height: 16px;
  text-align: center;
}
.group .has-launch { padding-right: 17px; }
.launch { position: absolute; right: 4px; top: 4px; }
.launch svg { width: 10px; height: 10px; }
.body { display: flex; height: 76px; }
.off { color: #a8a6a4; }
.big { flex-direction: column; padding-top: 2px; }
.big > svg:first-child { margin-bottom: 3px; }
.big > .chev { margin-top: 6px; }
.big span { display: flex; align-items: center; gap: 4px; }
.row { height: 24px; gap: 3px; }
.row .chev { margin-left: 2px; }
.row .far { margin-left: 10px; }
.tight .row { height: 23px; }

.clip { width: 201px; }
.clip .big { width: 40px; margin: 0 2px 0 11px; }
.slides { width: 179px; }
.slides .big { width: 74px; margin: 0 4px 0 8px; }
.font { width: 281px; }
.para { width: 350px; }
.para .lines { width: 183px; }
.draw { width: 429px; }
.edit { width: 111px; padding-left: 11px; }
.edit h2 { padding-right: 11px; }
.voice { width: 58px; }
.ideas { width: 73px; }
.voice .body, .ideas .body { justify-content: center; }

.lines { flex-direction: column; padding: 3px 0 0 7px; }
.line { display: flex; align-items: center; height: 32px; }
.combo { height: 23px; border: 1px solid #c8c6c4; border-radius: 0; background: #e1dfdd; opacity: 1; color: #a8a6a4; }
.face { width: 145px; margin-left: 1px; }
.size { width: 46px; margin-left: -1px; }
.t { justify-content: center; gap: 4px; font-size: 13px; }
.a-big { font-size: 16px; }
.a-mid { font-size: 14px; }
.t sup { font-size: 9px; line-height: 8px; align-self: flex-start; }
.t.a-big, .t.a-mid { gap: 0; }
.shade { text-shadow: 1px 1px 1px #ccc; font-weight: 600; }
.t em { font-family: "Liberation Serif", serif; font-size: 15px; }
.wide { margin-left: 3px; }
.w22 { width: 22px; }
.w24 { width: 24px; }
.w32 { width: 32px; }
.w37 { width: 37px; }
.w38 { width: 38px; }
.sep { width: 1px; height: 20px; margin: 0 5px; background: #d0cecc; }
.slim { margin: 0 2px; }

.gallery { display: flex; height: 61px; margin: 3px 4px 0 9px; border: 1px solid #c8c6c4; background: #fff; }
.gallery > svg { fill: none; stroke: #444; }
.gal-scroll { display: flex; flex-direction: column; width: 14px; background: #f3f2f1; border-left: 1px solid #c8c6c4; }
.gal-scroll button { flex: 1; justify-content: center; }
.gal-scroll button + button { border-top: 1px solid #c8c6c4; }
.draw .big { width: 42px; }
.draw .styles { width: 54px; margin-right: 6px; }
.collapse { margin: auto 8px 3px auto; }

/* Workspace */
.work { flex: 1; min-height: 0; display: flex; border-bottom: 1px solid #c0c0c0; }
.pane { flex: none; display: flex; justify-content: space-between; width: 291px; padding-right: 4px; border-right: 1px solid #c0c0c0; }
.thumbs { margin: 0; padding: 19px 4px 0 0; list-style: none; overflow: hidden; }
.thumbs li {
  display: grid;
  grid-template: 24px 1fr / 35px 216px;
  height: 123px;
  margin-bottom: 20px;
}
.num { grid-area: 1 / 1; padding-left: 11px; font-size: 16px; line-height: 10px; }
.sel .num { color: #d24726; }
.star { grid-area: 1 / 1; width: 11px; height: 12px; margin: 14px 0 0 9px; }
.thumb { grid-area: 1 / 2 / 3 / 3; width: 216px; height: 123px; background: #fff; outline: 1px solid #c4c4c4; outline-offset: -1px; }
.sel .thumb { outline: 3px solid #b7472a; outline-offset: 0; }
.thumb text { font-family: Lato, sans-serif; font-variant-ligatures: none; fill: #666; }
.thumb .tt { font-size: 11px; fill: #000; text-anchor: middle; }
.thumb .s4 { font-size: 4px; }
.thumb .s5 { font-size: 5px; }
.thumb .s6 { font-size: 6px; }
.thumb .mid { text-anchor: middle; }
.thumb .dark text { fill: #444; }
.thumb .m, .thumb .s6 text { font-family: "Liberation Serif", serif; font-style: italic; }
.thumb .paren { font-size: 10px; }
.ln { stroke: #000; fill: none; }

.scroll { display: flex; flex-direction: column; width: 15px; padding: 2px 0 1px; background: #dedede; }
.sb { width: 15px; height: 16px; justify-content: center; background: #fff; border: 1px solid #b4b4b4; }
.sb svg { width: 8px; height: 8px; }
.grip { height: 33px; background: #fff; border: 1px solid #b4b4b4; border-top: 0; }
.grip.long { height: 212px; }
.track { flex: 1; }
.right { flex: none; margin-right: 1px; padding-bottom: 23px; }
.jump { height: 17px; justify-content: center; }
.jump svg { fill: #666; stroke: none; }
.stage { flex: 1; padding: 17px 78px 17px 80px; border-bottom: 1px solid #c8c8c8; }
.slide { aspect-ratio: 16 / 9; background: #fff; border: 1px solid #c4c4c4; font-family: Lato, sans-serif; font-variant-ligatures: none; color: #000; text-align: center; }
.slide h1 { margin: 0; padding-top: 61px; font-size: 76px; font-weight: 300; line-height: 96px; -webkit-text-stroke: 1px #000; }
.slide p { margin: 152px 0 0; font-size: 34px; line-height: 48px; }

/* Status bar */
.status { flex: none; display: flex; align-items: center; height: 22px; padding: 0 4px 0 8px; background: #f3f2f1; }
.lang { margin-left: 32px; }
.notes { gap: 3px; margin: 0 20px 0 auto; }
.view { width: 40px; height: 22px; justify-content: center; }
.view.on { background: #c8c6c4; }
.zoom { width: 20px; justify-content: center; font-size: 16px; }
.plus { width: 16px; }
.status input { appearance: none; width: 100px; height: 12px; margin: 0; background: linear-gradient(#a0a0a0, #a0a0a0) center / 100% 1px no-repeat; }
.status input::-webkit-slider-thumb { appearance: none; width: 5px; height: 12px; background: #777; }
.pct { margin: 0 14px 0 7px; }

/* Taskbar */
.taskbar { flex: none; display: flex; height: 40px; background: #1e1e1e; color: #fff; }
.app { width: 49px; justify-content: center; border-bottom: 2px solid transparent; padding-top: 2px; }
.app svg { stroke: none; }
.app.run { background: linear-gradient(#76b9ed, #76b9ed) center bottom / 40px 2px no-repeat border-box; }
.app:first-child svg { fill: #fff; }
.logo { font: 700 11px "Open Sans", sans-serif; fill: #fff; text-anchor: middle; }
.tray { display: flex; align-items: center; gap: 10px; margin-left: auto; padding-right: 3px; }
.clock { display: flex; flex-direction: column; line-height: 18px; text-align: center; margin-right: 5px; }
.peek { width: 1px; height: 40px; margin-left: 11px; background: #666; }
```
